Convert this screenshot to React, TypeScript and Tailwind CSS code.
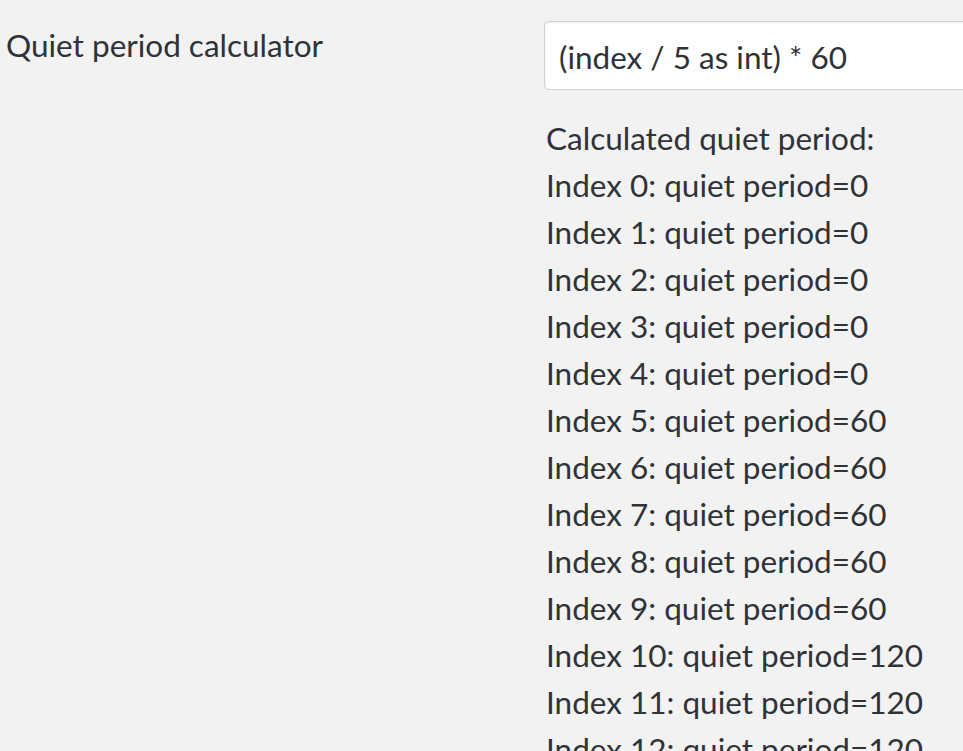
const rows = Array.from({ length: 13 }, (_, i) => ({ index: i, period: Math.floor(i / 5) * 60 }));

export default function App() {
  return (
    <div className="min-h-screen overflow-hidden bg-[#f2f2f2] text-[31.5px] leading-[47px] text-[#2f3337] [font-family:Lato,'Open_Sans',sans-serif]">
      <div className="flex pt-[21px]">
        <div className="w-[544px] shrink-0 pl-[6px] pt-[1px]">Quiet period calculator</div>
        <div className="flex-1">
          <div className="h-[69px] w-[480px] rounded-[5px] border border-[#cfcfcf] bg-white pl-[14px] pt-[12px] shadow-[inset_0_1px_2px_rgba(0,0,0,0.07)]">
            (index / 5 as int) * 60
          </div>
          <div className="mt-[25px] pl-[2px]">
            <div>Calculated quiet period:</div>
            {rows.map((r) => (
              <div key={r.index}>
                Index {r.index}: quiet period={r.period}
              </div>
            ))}
          </div>
        </div>
      </div>
    </div>
  );
}
